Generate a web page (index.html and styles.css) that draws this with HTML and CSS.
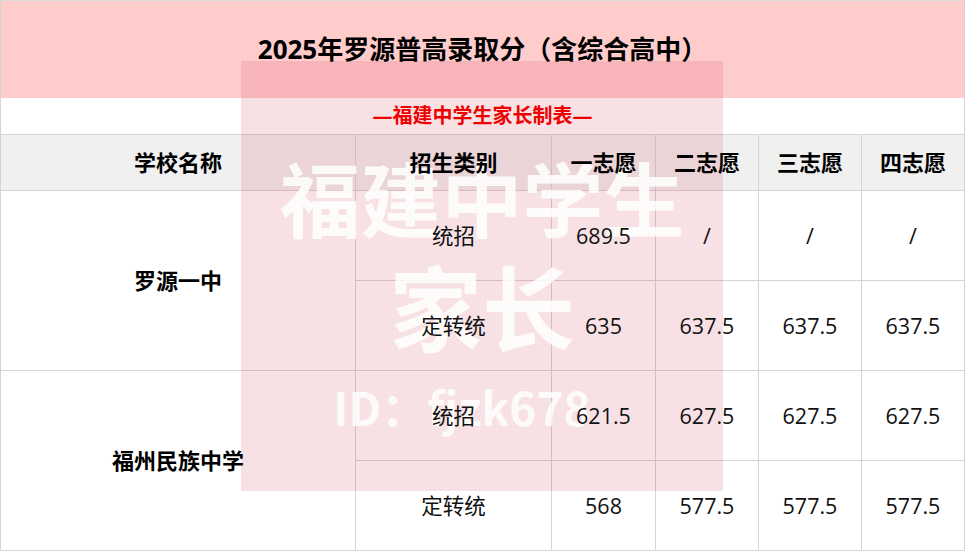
FILE: index.html
```html
<!DOCTYPE html>
<html lang="zh-CN">
<head>
<meta charset="utf-8">
<title>2025年罗源普高录取分</title>
<link rel="stylesheet" href="styles.css">
</head>
<body>
<div class="sheet">
  <table class="grid">
    <colgroup>
      <col class="c-school">
      <col class="c-type">
      <col class="c-v1">
      <col class="c-v">
      <col class="c-v">
      <col class="c-v">
    </colgroup>
    <tr class="title-row"><td colspan="6"><span class="t">2025年罗源普高录取分（含综合高中）</span></td></tr>
    <tr class="sub-row"><td colspan="6"><span class="t">—福建中学生家长制表—</span></td></tr>
    <tr class="head-row">
      <th><span class="t">学校名称</span></th>
      <th><span class="t">招生类别</span></th>
      <th><span class="t">一志愿</span></th>
      <th><span class="t">二志愿</span></th>
      <th><span class="t">三志愿</span></th>
      <th><span class="t">四志愿</span></th>
    </tr>
    <tr class="data-row">
      <td rowspan="2" class="school"><span class="t">罗源一中</span></td>
      <td><span class="t">统招</span></td>
      <td><span class="t">689.5</span></td>
      <td><span class="t">/</span></td>
      <td><span class="t">/</span></td>
      <td><span class="t">/</span></td>
    </tr>
    <tr class="data-row">
      <td><span class="t">定转统</span></td>
      <td><span class="t">635</span></td>
      <td><span class="t">637.5</span></td>
      <td><span class="t">637.5</span></td>
      <td><span class="t">637.5</span></td>
    </tr>
    <tr class="data-row">
      <td rowspan="2" class="school"><span class="t">福州民族中学</span></td>
      <td><span class="t">统招</span></td>
      <td><span class="t">621.5</span></td>
      <td><span class="t">627.5</span></td>
      <td><span class="t">627.5</span></td>
      <td><span class="t">627.5</span></td>
    </tr>
    <tr class="data-row">
      <td><span class="t">定转统</span></td>
      <td><span class="t">568</span></td>
      <td><span class="t">577.5</span></td>
      <td><span class="t">577.5</span></td>
      <td><span class="t">577.5</span></td>
    </tr>
  </table>
  <div class="wm" aria-hidden="true">
    <div class="wm-line1">福建中学生</div>
    <div class="wm-line2">家长</div>
    <div class="wm-line3">ID：fjzk678</div>
  </div>
</div>
</body>
</html>
```
FILE: styles.css
```css
html, body {
  margin: 0;
  padding: 0;
  background: #ffffff;
}

body {
  font-family: "Open Sans", "Noto Sans CJK SC", sans-serif;
  color: #111111;
}

.sheet {
  position: relative;
  width: 965px;
  height: 552px;
  overflow: hidden;
}

.grid {
  border-collapse: collapse;
  table-layout: fixed;
  width: 965px;
}

.c-school { width: 355px; }
.c-type { width: 196px; }
.c-v1 { width: 104px; }
.c-v { width: 103px; }

.grid td,
.grid th {
  border: 1px solid #d6d2d6;
  padding: 0;
  text-align: center;
  vertical-align: middle;
  line-height: 1.2;
}

.t {
  position: relative;
  z-index: 2;
}

.title-row td {
  height: 96px;
  background: #ffcccc;
  font-size: 26px;
  font-weight: 700;
  color: #000000;
  border-bottom: none;
  border-top-color: #e2dcdc;
  padding-top: 1px;
}

.sub-row td {
  height: 36px;
  border-top: none;
  background: #ffffff;
  font-size: 20px;
  font-weight: 700;
  color: #ee0000;
}

.head-row th {
  height: 55px;
  background: #f0f0f0;
  font-size: 22px;
  font-weight: 700;
  color: #000000;
}

.data-row td {
  height: 89px;
  font-size: 21.5px;
  font-weight: 400;
  color: #111111;
}

.data-row td.school {
  font-size: 22px;
  font-weight: 700;
  color: #000000;
}

.wm {
  position: absolute;
  left: 241px;
  top: 61px;
  width: 482px;
  height: 430px;
  z-index: 1;
  background: rgba(208, 55, 82, 0.15);
  display: flex;
  flex-direction: column;
  align-items: center;
  font-family: "Noto Sans CJK SC", sans-serif;
  font-weight: 700;
  color: rgba(255, 255, 255, 0.85);
  line-height: 1;
  pointer-events: none;
}

.wm-line1 {
  margin-top: 94px;
  font-size: 81px;
}

.wm-line2 {
  margin-top: 22px;
  font-size: 93px;
}

.wm-line3 {
  margin-top: 32px;
  margin-right: 40px;
  font-size: 46px;
}
```
